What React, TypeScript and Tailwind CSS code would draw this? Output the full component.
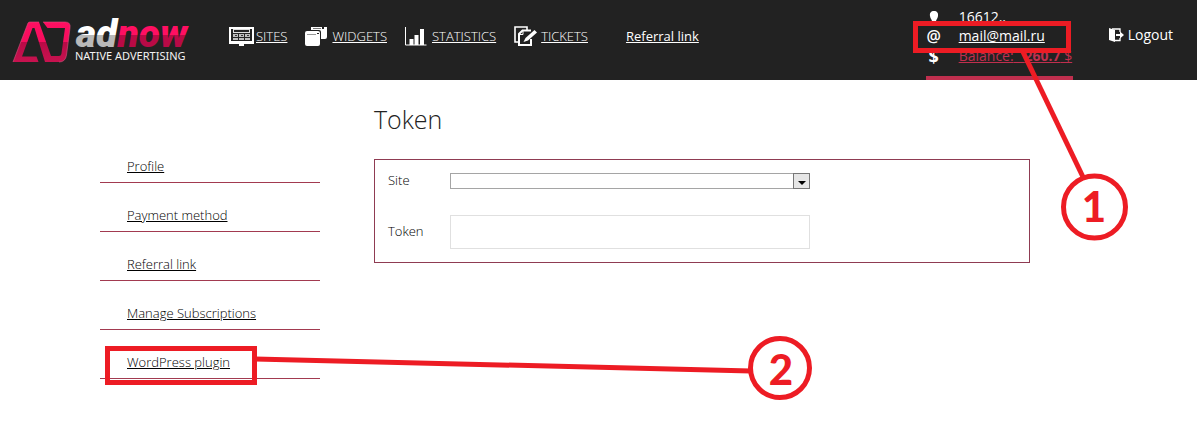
import React from "react";

const RED = "#ed1c24";

function Logo() {
  return (
    <svg viewBox="0 0 182 60" className="h-[60px] w-[182px] overflow-visible" role="img" aria-label="adnow native advertising">
      <defs>
        <linearGradient id="pink" gradientUnits="userSpaceOnUse" x1="0" y1="6" x2="0" y2="48">
          <stop offset="0" stopColor="#ff0f62" />
          <stop offset="0.49" stopColor="#f50d5d" />
          <stop offset="0.5" stopColor="#b80a46" />
          <stop offset="1" stopColor="#c81350" />
        </linearGradient>
        <linearGradient id="pinkText" gradientUnits="userSpaceOnUse" x1="0" y1="8" x2="0" y2="32">
          <stop offset="0.5" stopColor="#ff0f62" />
          <stop offset="0.51" stopColor="#b80a46" />
        </linearGradient>
        <linearGradient id="silver" gradientUnits="userSpaceOnUse" x1="0" y1="8" x2="0" y2="32">
          <stop offset="0.5" stopColor="#ffffff" />
          <stop offset="0.51" stopColor="#b9b9b9" />
        </linearGradient>
      </defs>
      <path d="M-1 47L14 8Q14.500 7 16 7H25L37 41H45Q47 41 47.400 39L51 13H33.500L29 7H51Q57 7 56 13L52.500 40Q51.500 47 45 47H31L20.500 13H18.500L8 41.500H22.500L24.500 47Z" fill="url(#pink)" />
      <path d="M-1 47L14 8Q14.500 7 16 7H25M29 7H51Q57 7 56 13L52.500 40Q51.500 47 45 47" fill="none" stroke="#d8527f" strokeWidth="0.600" />
      <text x="62" y="32" fontFamily="Roboto, sans-serif" fontSize="39" fontWeight="900" fontStyle="italic" fill="url(#silver)">
        ad<tspan fill="url(#pinkText)">now</tspan>
      </text>
      <text x="61" y="45" fontFamily="'Noto Sans', sans-serif" fontSize="11" fill="#f2f2f2">
        NATIVE ADVERTISING
      </text>
    </svg>
  );
}

function SitesIcon() {
  return (
    <svg viewBox="0 0 25 20" className="h-5 w-[25px]" aria-hidden="true">
      <rect x="1" y="2" width="23" height="14" fill="none" stroke="#fff" strokeWidth="2" />
      <rect x="4.500" y="3.500" width="16" height="3" fill="none" stroke="#ddd" />
      <path d="M4 8h5v3H4zM10 8h5v3h-5zM16 8h5v3h-5zM4 12h5v2H4zM10 12h5v2h-5zM16 12h5v2h-5z" fill="#bbb" />
      <path d="M6 9.500h2M12 9.500h2M18 9.500h2" stroke="#333" />
      <path d="M0 15h25v3H15v2h-5v-2H0z" fill="#fff" />
    </svg>
  );
}

function WidgetsIcon() {
  return (
    <svg viewBox="0 0 22 20" className="h-5 w-[22px]" aria-hidden="true">
      <path d="M6 1h11v2h2V1h3v10q0 2-2 2h-4V6q0-2-2-2H6z" fill="#fff" />
      <path d="M8 2.500h8" stroke="#777" />
      <rect x="0" y="5" width="15" height="15" rx="2" fill="#fff" />
      <path d="M2 8.500h9" stroke="#999" />
      <path d="M12 7.500h2" stroke="#222" />
    </svg>
  );
}

function StatisticsIcon() {
  return (
    <svg viewBox="0 0 22 20" className="h-5 w-[22px]" aria-hidden="true">
      <path d="M0.500 1v18h21" fill="none" stroke="#fff" />
      <path d="M4.500 13h4v6h-4zM9.500 9h4v10h-4zM15 3h4v16h-4z" fill="#fff" />
    </svg>
  );
}

function TicketsIcon() {
  return (
    <svg viewBox="0 0 24 20" className="h-5 w-6" aria-hidden="true">
      <path d="M5 16H1V1h12v3" fill="none" stroke="#fff" strokeWidth="1.600" />
      <path d="M17 4.500H8.500L5 8v11h12v-6" fill="none" stroke="#fff" strokeWidth="2" />
      <path d="M5 8.500h4V4.500" fill="none" stroke="#fff" />
      <path d="M20.500 4l2.500 2.500-9 8-4.500 1.500 2-4z" fill="#fff" />
    </svg>
  );
}

function PersonIcon() {
  return (
    <svg viewBox="0 0 16 16" className="h-4 w-4" aria-hidden="true">
      <path d="M8 2c3 0 4.500 2 4 5-.3 2-1.500 3.500-2 5l4 2v2H2v-2l4-2c-.5-1.500-1.700-3-2-5-.5-3 1-5 4-5z" fill="#fff" />
    </svg>
  );
}

function LogoutIcon() {
  return (
    <svg viewBox="0 0 15 14" className="h-[14px] w-[15px]" aria-hidden="true">
      <path d="M0 0l6 2v12l-6-2z" fill="#fff" />
      <path d="M3 1h8v3M6 12.500h5V10" fill="none" stroke="#fff" strokeWidth="1.300" />
      <path d="M7 6h4V3.500l4 3.500-4 3.500V8H7z" fill="#fff" />
    </svg>
  );
}

const NAV = [
  { label: "SITES", icon: <SitesIcon /> },
  { label: "WIDGETS", icon: <WidgetsIcon /> },
  { label: "STATISTICS", icon: <StatisticsIcon /> },
  { label: "TICKETS", icon: <TicketsIcon /> },
];

const MENU = ["Profile", "Payment method", "Referral link", "Manage Subscriptions", "WordPress plugin"];

function StepOne() {
  return (
    <svg
      viewBox="0 0 220 224"
      className="pointer-events-none absolute -left-[13px] top-[20px] h-[224px] w-[220px]"
      role="img"
      aria-label="Step 1"
    >
      <rect x="2.500" y="3.500" width="153" height="27" fill="none" stroke={RED} strokeWidth="5" />
      <path d="M110 32L170 157" stroke={RED} strokeWidth="5" />
      <circle cx="181.500" cy="187" r="31" fill="#fff" stroke={RED} strokeWidth="5" />
      <text x="181" y="202" textAnchor="middle" fontFamily="Lato, sans-serif" fontSize="42" fontWeight="900" fill={RED}>
        1
      </text>
    </svg>
  );
}

function StepTwo() {
  return (
    <svg
      viewBox="0 0 710 66"
      className="pointer-events-none absolute left-[5px] top-[5px] h-[66px] w-[710px]"
      role="img"
      aria-label="Step 2"
    >
      <rect x="2.500" y="13.500" width="147" height="34" fill="none" stroke={RED} strokeWidth="5" />
      <path d="M150 24L646 36" stroke={RED} strokeWidth="5" />
      <circle cx="675" cy="33" r="29.500" fill="#fff" stroke={RED} strokeWidth="5" />
      <text x="676" y="50" textAnchor="middle" fontFamily="Lato, sans-serif" fontSize="42" fontWeight="900" fill={RED}>
        2
      </text>
    </svg>
  );
}

export default function App() {
  return (
    <div className="min-h-screen bg-white font-['Open_Sans','Noto_Sans',sans-serif] text-[#222]">
      <header className="relative z-10 flex h-20 items-start bg-[#222] pl-[14px] pr-6 text-sm text-white">
        <a href="#home" className="mt-[15px] block">
          <Logo />
        </a>
        <nav className="ml-[33px] mt-[26px] flex h-5 items-center gap-[18px] text-[13px] font-light">
          {NAV.map((item) => (
            <a key={item.label} href={"#" + item.label.toLowerCase()} className="flex items-center">
              <span className="w-[27px]">{item.icon}</span>
              <span className="underline">{item.label}</span>
            </a>
          ))}
          <a href="#referral" className="ml-5 font-normal underline">
            Referral link
          </a>
        </nav>

        <div className="relative ml-auto flex h-20 w-[147px] flex-col border-b-4 border-[#c02f4e] pt-[7px]">
          <div className="flex h-[19px] items-center gap-[17px]">
            <PersonIcon />
            <span>16612..</span>
          </div>
          <div className="flex h-5 items-center gap-[17px]">
            <span className="w-4 text-center text-base leading-5 font-semibold">@</span>
            <a href="#mail" className="underline">
              mail@mail.ru
            </a>
          </div>
          <div className="flex h-[19px] items-center gap-[17px]">
            <span className="w-4 text-center text-lg leading-5 font-bold">$</span>
            <a href="#balance" className="whitespace-nowrap text-[#c02f4e] underline">
              Balance:{"\u00a0\u00a0\u00a0"}
              <b>260.7</b> $
            </a>
          </div>
          <StepOne />
        </div>

        <a href="#logout" className="ml-9 mt-[25px] flex h-5 items-center gap-1">
          <LogoutIcon />
          Logout
        </a>
      </header>

      <div className="flex items-start pl-[100px] pr-[167px]">
        <nav className="relative mt-[54px] w-[220px] shrink-0">
          <ul>
            {MENU.map((label) => (
              <li
                key={label}
                className="relative flex h-[49px] items-end border-b border-[#a23a50] pb-[6px] pl-[27px] text-[13px] leading-5"
              >
                <a href={"#" + label.toLowerCase().replace(" ", "-")} className="font-light text-black underline">
                  {label}
                </a>
                {label === "WordPress plugin" && <StepTwo />}
              </li>
            ))}
          </ul>
        </nav>

        <main className="ml-[54px] flex-1 pt-[21px]">
          <h1 className="text-[25px] leading-9 font-light text-[#222]">Token</h1>
          <form className="mt-[22px] flex h-[104px] flex-col border border-[#8f3b52] pl-[13px] pt-[13px] text-[13px] font-light text-black">
            <div className="flex h-4 items-center">
              <label htmlFor="site" className="w-[62px]">
                Site
              </label>
              <div className="relative flex w-[360px]">
                <select id="site" className="h-4 w-full appearance-none border border-[#a5a5a5] bg-white" />
                <span className="pointer-events-none absolute right-0 top-0 flex h-4 w-[17px] items-end justify-center border border-[#777] bg-[#e6e6e6] pb-[3px]">
                  <svg viewBox="0 0 8 4" className="h-1 w-2" aria-hidden="true">
                    <path d="M0 0h8L4 4z" fill="#000" />
                  </svg>
                </span>
              </div>
            </div>
            <div className="mt-[26px] flex h-[34px] items-center">
              <label htmlFor="token" className="w-[62px]">
                Token
              </label>
              <input id="token" type="text" className="h-[34px] w-[360px] border border-[#e0e0e0] bg-white px-2" />
            </div>
          </form>
        </main>
      </div>
    </div>
  );
}
